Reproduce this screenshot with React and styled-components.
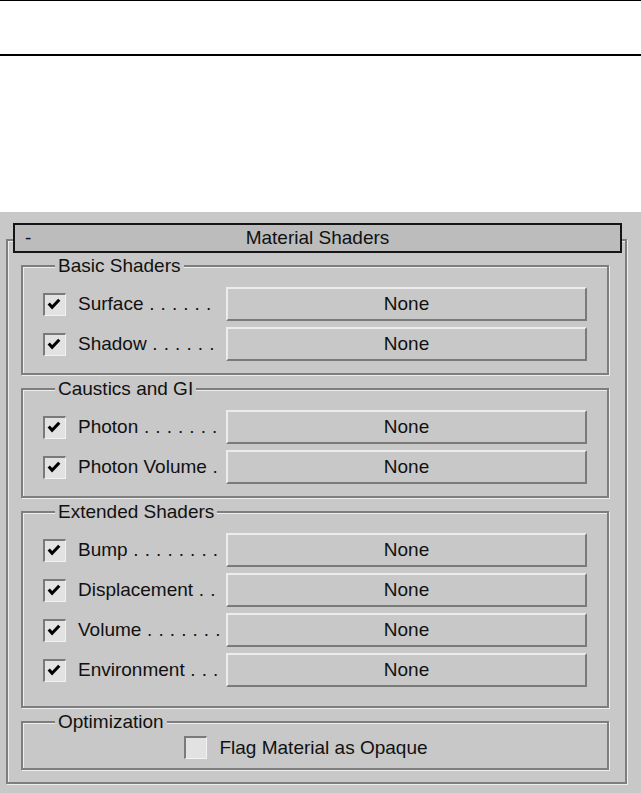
import React from 'react';
import styled, { createGlobalStyle } from 'styled-components';

const GlobalStyle = createGlobalStyle`
  html, body {
    margin: 0;
    padding: 0;
    background: #ffffff;
  }
  body {
    font-family: "Liberation Sans", Arial, sans-serif;
  }
`;

const groups = [
  {
    title: 'Basic Shaders',
    rows: [
      ['Surface', 6],
      ['Shadow', 6],
    ],
  },
  {
    title: 'Caustics and GI',
    rows: [
      ['Photon', 7],
      ['Photon Volume', 1],
    ],
  },
  {
    title: 'Extended Shaders',
    rows: [
      ['Bump', 8],
      ['Displacement', 2],
      ['Volume', 7],
      ['Environment', 3],
    ],
    tall: true,
  },
];

const CheckMark = () => (
  <svg width="23" height="23" viewBox="0 0 23 23">
    <path d="M6 11.5 L9.5 15.5 L17 7.5" fill="none" stroke="#000" strokeWidth="3.2" />
  </svg>
);

const App = () => {
  return (
    <>
      <GlobalStyle />
      <Page>
        <TopRule />
        <Panel>
          <Rollout>
            <RolloutHeader>
              <Toggle>-</Toggle>
              <RolloutTitle>Material Shaders</RolloutTitle>
              <Toggle />
            </RolloutHeader>
            <GroupList>
              {groups.map((g) => (
                <Group key={g.title} tall={g.tall}>
                  <Legend>{g.title}</Legend>
                  <Rows>
                    {g.rows.map(([name, dots]) => (
                      <Row key={name}>
                        <CheckBox>
                          <CheckMark />
                        </CheckBox>
                        <Label>
                          {name}
                          <Dots>{' .'.repeat(dots)}</Dots>
                        </Label>
                        <MapButton>None</MapButton>
                      </Row>
                    ))}
                  </Rows>
                </Group>
              ))}
              <Group small>
                <Legend>Optimization</Legend>
                <CenterRow>
                  <CheckBox />
                  <Caption>Flag Material as Opaque</Caption>
                </CenterRow>
              </Group>
            </GroupList>
          </Rollout>
        </Panel>
      </Page>
    </>
  );
};

const Page = styled.div`
  width: 641px;
  height: 793px;
  display: flex;
  flex-direction: column;
  overflow: hidden;
`;

const TopRule = styled.div`
  height: 53px;
  border-top: 1px solid #000;
  border-bottom: 2px solid #000;
`;

const Panel = styled.div`
  margin-top: 156px;
  flex: 1;
  background: #c8c8c8;
  padding: 27px 14px 0 6px;
  color: #111;
  font-size: 19px;
`;

const Rollout = styled.div`
  border: 2px solid #7e7e7e;
  box-shadow: inset 1px 1px 0 #eeeeee, 1px 1px 0 #eeeeee;
  padding: 0 0 12px 0;
`;

const RolloutHeader = styled.div`
  display: flex;
  align-items: center;
  height: 26px;
  margin: -18px 3px 0 5px;
  background: #bcbcbc;
  border: 2px solid #151515;
`;

const Toggle = styled.span`
  width: 30px;
  padding-left: 10px;
  line-height: 20px;
`;

const RolloutTitle = styled.span`
  flex: 1;
  text-align: center;
  line-height: 20px;
`;

const GroupList = styled.div`
  display: flex;
  flex-direction: column;
  gap: 3px;
  margin: 2px 16px 0 13px;
`;

const Group = styled.fieldset`
  margin: 0;
  min-width: 0;
  border: 2px solid #7e7e7e;
  box-shadow: inset 1px 1px 0 #eeeeee, 1px 1px 0 #eeeeee;
  padding: ${(p) => (p.small ? '3px 20px 9px' : p.tall ? '10px 20px 19px' : '10px 20px 12px')};
`;

const Legend = styled.legend`
  margin-left: 12px;
  padding: 0 3px;
  line-height: 22px;
  background: #c8c8c8;
`;

const Rows = styled.div`
  display: flex;
  flex-direction: column;
  gap: 6px;
`;

const Row = styled.div`
  display: flex;
  align-items: center;
  height: 34px;
`;

const CheckBox = styled.span`
  flex: none;
  width: 23px;
  height: 23px;
  box-sizing: border-box;
  display: flex;
  align-items: center;
  justify-content: center;
  background: #e2e2e2;
  border-top: 2px solid #7a7a7a;
  border-left: 2px solid #7a7a7a;
  border-right: 1px solid #f2f2f2;
  border-bottom: 1px solid #f2f2f2;

  svg {
    margin: -2px 0 0 -2px;
  }
`;

const Label = styled.span`
  width: 146px;
  margin: 0 2px 0 12px;
  white-space: pre;
`;

const Dots = styled.span`
  letter-spacing: 0.4px;
`;

const MapButton = styled.div`
  flex: 1;
  height: 34px;
  box-sizing: border-box;
  display: flex;
  align-items: center;
  justify-content: center;
  border-top: 2px solid #ececec;
  border-left: 2px solid #ececec;
  border-right: 2px solid #7a7a7a;
  border-bottom: 2px solid #7a7a7a;
`;

const CenterRow = styled.div`
  display: flex;
  align-items: center;
  justify-content: center;
  gap: 12px;
  height: 23px;
  padding-right: 18px;
`;

const Caption = styled.span`
  white-space: nowrap;
`;

export default App;
